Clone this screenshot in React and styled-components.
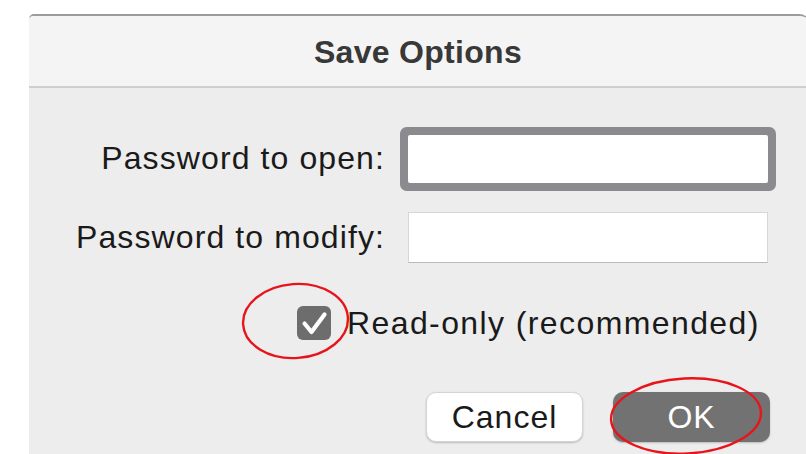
import styled, { createGlobalStyle } from "styled-components";

const GlobalStyle = createGlobalStyle`
  html, body {
    margin: 0;
    padding: 0;
    background: #ffffff;
    overflow: hidden;
  }
  body {
    font-family: "Liberation Sans", Arial, sans-serif;
  }
`;

const Page = styled.div`
  position: relative;
  width: 806px;
  height: 454px;
  padding: 14px 0 0 29px;
  box-sizing: border-box;
  overflow: hidden;
`;

const Dialog = styled.div`
  width: 782px;
  height: 460px;
  border-top: 2px solid #9c9c9c;
  border-radius: 5px 12px 0 0;
  overflow: hidden;
  background: #ededed;
  display: flex;
  flex-direction: column;
`;

const TitleBar = styled.div`
  height: 72px;
  box-sizing: border-box;
  background: #f4f4f4;
  border-bottom: 2px solid #cfcfcf;
  display: flex;
  align-items: center;
  justify-content: center;
  font-size: 32px;
  font-weight: 700;
  letter-spacing: 0.3px;
  color: #383838;
  padding-right: 4px;
  padding-top: 2px;
`;

const Body = styled.div`
  padding-top: 46px;
  display: flex;
  flex-direction: column;
`;

const FormGrid = styled.div`
  display: grid;
  grid-template-columns: 355px 360px;
  column-gap: 24px;
  row-gap: 29px;
  align-items: center;
`;

const Label = styled.label`
  text-align: right;
  font-size: 32px;
  letter-spacing: 1.1px;
  color: #1a1a1a;
  margin-right: -1px;
`;

const TextField = styled.input`
  box-sizing: border-box;
  width: 360px;
  height: ${(p) => (p.$focused ? "48px" : "51px")};
  margin: 0;
  background: #ffffff;
  border: 1px solid #d6d6d6;
  border-bottom-color: #b9b9b9;
  outline: none;
  font-size: 24px;
  ${(p) =>
    p.$focused &&
    `
    border: none;
    box-shadow: 0 0 0 8px #8b8b8f;
    border-radius: 2px;
  `}
`;

const FocusWrap = styled.div`
  display: flex;
  margin-top: 1px;
`;

const CheckRow = styled.label`
  display: flex;
  align-items: center;
  gap: 16px;
  margin-top: 42px;
  padding-left: 268px;
  height: 36px;
  font-size: 32px;
  letter-spacing: 1.4px;
  color: #1a1a1a;
`;

const CheckBox = styled.span`
  width: 34px;
  height: 34px;
  border-radius: 6px;
  background: #6d6d6d;
  display: flex;
  align-items: center;
  justify-content: center;
  flex-shrink: 0;
`;

const ButtonRow = styled.div`
  display: flex;
  gap: 30px;
  margin-top: 51px;
  padding-left: 397px;
`;

const Button = styled.button`
  width: 157px;
  height: 50px;
  border-radius: 10px;
  font-family: "Liberation Sans", Arial, sans-serif;
  font-size: 32px;
  letter-spacing: 1px;
  display: flex;
  align-items: center;
  justify-content: center;
  padding: 0;
  cursor: pointer;
  background: ${(p) => (p.$primary ? "#727272" : "#ffffff")};
  color: ${(p) => (p.$primary ? "#ffffff" : "#1a1a1a")};
  border: ${(p) => (p.$primary ? "none" : "1px solid #d4d4d4")};
  box-shadow: 0 1px 2px rgba(0, 0, 0, 0.22);
`;

const Marks = styled.svg`
  position: absolute;
  left: 0;
  top: 0;
  pointer-events: none;
`;

export default function App() {
  return (
    <>
      <GlobalStyle />
      <Page>
        <Dialog>
          <TitleBar>Save Options</TitleBar>
          <Body>
            <FormGrid>
              <Label>Password to open:</Label>
              <FocusWrap>
                <TextField type="password" $focused />
              </FocusWrap>
              <Label>Password to modify:</Label>
              <TextField type="password" />
            </FormGrid>

            <CheckRow>
              <CheckBox>
                <svg width="34" height="34" viewBox="0 0 34 34">
                  <path
                    d="M7.5 17.5 L14.5 26 L27.5 8.5"
                    fill="none"
                    stroke="#ffffff"
                    strokeWidth="4.2"
                    strokeLinecap="round"
                    strokeLinejoin="round"
                  />
                </svg>
              </CheckBox>
              Read-only (recommended)
            </CheckRow>

            <ButtonRow>
              <Button>Cancel</Button>
              <Button $primary>OK</Button>
            </ButtonRow>
          </Body>
        </Dialog>

        <Marks width="806" height="454" viewBox="0 0 806 454">
          <ellipse
            cx="295.5"
            cy="321"
            rx="52.5"
            ry="37"
            fill="none"
            stroke="#e8141c"
            strokeWidth="2.4"
            transform="rotate(-4 295.5 321)"
          />
          <ellipse
            cx="686"
            cy="416"
            rx="75"
            ry="37.5"
            fill="none"
            stroke="#e8141c"
            strokeWidth="2.4"
            transform="rotate(-3 686 416)"
          />
        </Marks>
      </Page>
    </>
  );
}
